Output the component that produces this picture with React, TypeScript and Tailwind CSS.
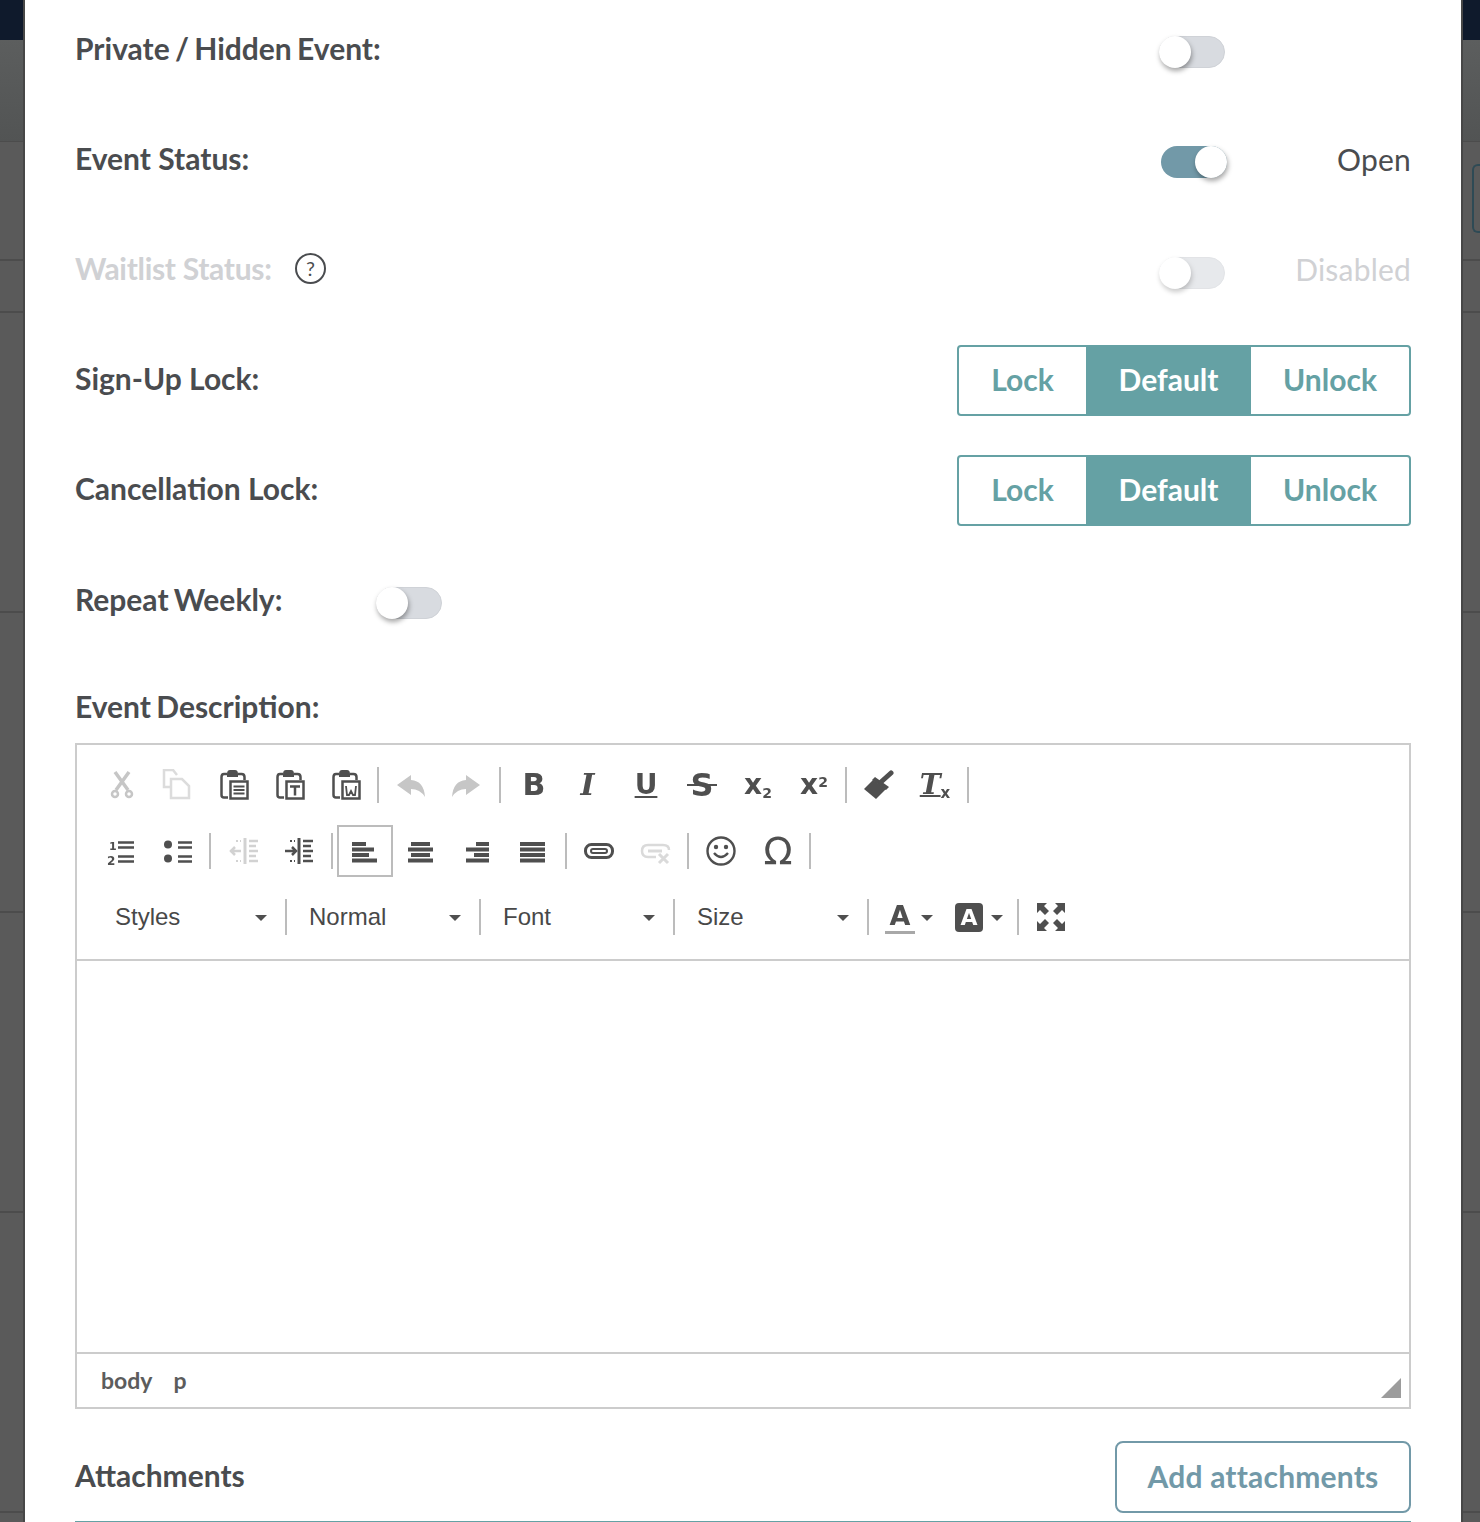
import React from "react";

const LABEL_FONT = "font-['Lato','Noto_Sans',sans-serif]";

function Toggle({ on, disabled }: { on?: boolean; disabled?: boolean }) {
  return (
    <div className={`relative w-[68px] h-[32px] shrink-0 ${disabled ? "opacity-60" : ""}`}>
      {on ? (
        <div className="ml-[2px] w-[66px] h-[32px] rounded-full bg-[#7299a8]" />
      ) : (
        <div className="w-[66px] h-[32px] rounded-full bg-[#d8dbe0] border border-[#cfd2d7]" />
      )}
      <div
        className={`absolute top-0 w-[32px] h-[32px] rounded-full bg-white shadow-[1px_3px_5px_rgba(0,0,0,0.35)] ${on ? "left-[36px]" : "left-0"}`}
      />
    </div>
  );
}

function Label({ children, faded, className = "" }: { children: React.ReactNode; faded?: boolean; className?: string }) {
  return (
    <div className={`-mt-[4px] text-[30px] leading-[36px] font-bold ${className} ${faded ? "text-[#d0d1d4]" : "text-[#4a4c4f]"}`}>
      {children}
    </div>
  );
}

function LockGroup() {
  return (
    <div className="flex w-[454px] h-[71px] border-2 border-[#65a1a4] rounded-[4px] text-[30px] font-bold text-[#65a1a4] overflow-hidden">
      <div className="w-[127px] flex items-center justify-center pb-[2px]">Lock</div>
      <div className="w-[165px] flex items-center justify-center pb-[2px] bg-[#65a1a4] text-white">Default</div>
      <div className="flex-1 flex items-center justify-center pb-[2px]">Unlock</div>
    </div>
  );
}

function Sep({ combo, wide }: { combo?: boolean; wide?: boolean }) {
  return (
    <div
      className={`w-[2px] h-[36px] bg-[#bcbcbc] shrink-0 ${wide ? "ml-[4px]" : "ml-[3px]"} ${combo ? "mr-[1px]" : "mr-[5px]"}`}
    />
  );
}

function Btn({ children, active }: { children: React.ReactNode; active?: boolean }) {
  return (
    <div
      className={`w-[56px] h-[52px] shrink-0 flex items-center justify-center ${active ? "border-2 border-[#bcbcbc] -ml-[1px]" : ""}`}
    >
      {children}
    </div>
  );
}

function Ico({ children, color = "#4f4f4f", sw = 2.5 }: { children: React.ReactNode; color?: string; sw?: number }) {
  return (
    <svg width="32" height="32" viewBox="0 0 32 32" fill="none" stroke={color} strokeWidth={sw} className="blur-[0.4px]">
      {children}
    </svg>
  );
}

function Clip({ children }: { children: React.ReactNode }) {
  return (
    <Ico>
      <path d="M9 5H6Q3.500 5 3.500 8v18q0 2.500 2.500 2.500h4" />
      <path d="M20 5h3.500q3 0 3 3v3" />
      <path d="M9 8V5q0-4 3-4h5q3 0 3 4v3z" fill="#4f4f4f" stroke="none" />
      <rect x="12.500" y="12.500" width="17" height="17" fill="#fff" />
      {children}
    </Ico>
  );
}

function AlignIcon({ rows }: { rows: [number, number][] }) {
  return (
    <Ico>
      {rows.map(([x, w], i) => (
        <rect key={i} x={x} y={7 + i * 5.5} width={w} height="4" fill="#4f4f4f" stroke="none" />
      ))}
    </Ico>
  );
}

function Glyph({ children, className }: { children: React.ReactNode; className: string }) {
  return <span className={`relative text-[#4f4f4f] leading-none blur-[0.3px] ${className}`}>{children}</span>;
}

function Combo({ label }: { label: string }) {
  return (
    <div className="w-[188px] h-[52px] shrink-0 flex items-center pl-[21px] pr-[15px] justify-between">
      <span className="text-[24px] text-[#484848] font-['Liberation_Sans',Arial,sans-serif]">{label}</span>
      <Caret />
    </div>
  );
}

function Caret() {
  return <span className="w-0 h-0 border-x-[6px] border-x-transparent border-t-[6px] border-t-[#4f4f4f] mt-[2px]" />;
}

export default function App() {
  return (
    <div className={`w-[1480px] h-[1522px] flex overflow-hidden bg-[#5a5a5a] ${LABEL_FONT}`}>
      <div className="w-[25px] shrink-0 flex flex-col border-r-2 border-[#474747]">
        <div className="h-[40px] bg-[#0f1a2c]" />
        <div className="h-[102px] bg-gradient-to-b from-[#5c5e5e] to-[#525454] border-b border-[#4c4c4c]" />
        <div className="h-[119px] border-b-2 border-[#4c4c4c]" />
        <div className="h-[52px] border-b-2 border-[#4c4c4c]" />
        <div className="h-[300px] border-b-2 border-[#4c4c4c]" />
        <div className="h-[300px] border-b-2 border-[#4c4c4c]" />
        <div className="h-[300px] border-b-2 border-[#4c4c4c]" />
        <div className="h-[300px] border-b-2 border-[#4c4c4c]" />
      </div>

      <div className="w-[1436px] shrink-0 h-full bg-white px-[50px] pt-[15px]">
        <div className="h-[70px] mb-[40px] flex items-center">
          <div className="flex-1"><Label className="[word-spacing:-2px]">Private / Hidden Event:</Label></div>
          <div className="mt-[4px]"><Toggle /></div>
          <div className="w-[184px]" />
        </div>
        <div className="h-[70px] mb-[40px] flex items-center">
          <div className="flex-1"><Label>Event Status:</Label></div>
          <div className="mt-[4px]"><Toggle on /></div>
          <div className="w-[184px] -mt-[2px] text-right text-[30px] tracking-[0.2px] text-[#4a4c4f] leading-[36px]">Open</div>
        </div>
        <div className="h-[70px] mb-[40px] flex items-center">
          <div className="flex-1 flex items-center">
            <div className="w-[220px]"><Label faded className="tracking-[-0.3px]">Waitlist Status:</Label></div>
            <div className="-mt-[4px] w-[31px] h-[31px] rounded-full border-2 border-[#4a4c4f] flex items-center justify-center text-[20px] text-[#4a4c4f] leading-none">?</div>
          </div>
          <div className="mt-[5px]"><Toggle disabled /></div>
          <div className="w-[184px] -mt-[2px] text-right text-[30px] tracking-[0.2px] text-[#d0d1d4] leading-[36px]">Disabled</div>
        </div>
        <div className="h-[70px] mb-[40px] flex items-center">
          <div className="flex-1"><Label>Sign-Up Lock:</Label></div>
          <LockGroup />
        </div>
        <div className="h-[70px] mb-[41px] flex items-center">
          <div className="flex-1"><Label>Cancellation Lock:</Label></div>
          <LockGroup />
        </div>
        <div className="h-[70px] flex items-center">
          <div className="w-[301px]"><Label className="[word-spacing:-2px]">Repeat Weekly:</Label></div>
          <div className="mt-[4px]"><Toggle /></div>
        </div>

        <div className="mt-[56px] h-[37px] mb-[18px]"><Label className="[word-spacing:-2px]">Event Description:</Label></div>

        <div className="w-[1336px] h-[666px] border-2 border-[#cccccc] flex flex-col">
          <div className="h-[216px] border-b-2 border-[#cccccc] px-[17px] pt-[7px] shrink-0">
            <div className="h-[66px] flex items-center">
              <Btn>
                <Ico color="#c6c6c6">
                  <path d="M9 3l13 18M23 3L10 21" strokeWidth="3.500" />
                  <circle cx="9" cy="25" r="3" />
                  <circle cx="23" cy="25" r="3" />
                </Ico>
              </Btn>
              <Btn>
                <Ico color="#dcdcdc">
                  <path d="M9 18H2V1h9l4 5" />
                  <path d="M9 10h11l7 7v12H9z" fill="#fff" />
                </Ico>
              </Btn>
              <Btn>
                <Clip>
                  <path d="M15.500 17.500h11M15.500 21h11M15.500 24.500h11" strokeWidth="2" />
                </Clip>
              </Btn>
              <Btn>
                <Clip>
                  <path d="M16 17.500h10M21 17.500v9" strokeWidth="2.500" />
                </Clip>
              </Btn>
              <Btn>
                <Clip>
                  <path d="M16 17l1 9h2l2-4 2 4h2l1-9" strokeWidth="1.800" />
                </Clip>
              </Btn>
              <Sep />
              <Btn>
                <Ico color="#c6c6c6">
                  <path d="M1 16L15 6v5Q28 12 29 28 24 20 15 20v6z" fill="#c6c6c6" stroke="none" />
                </Ico>
              </Btn>
              <Btn>
                <Ico color="#c6c6c6">
                  <path d="M28 16L14 6v5Q1 12 0 28 5 20 14 20v6z" fill="#c6c6c6" stroke="none" />
                </Ico>
              </Btn>
              <Sep />
              <Btn><Glyph className="text-[30px] font-bold font-['DejaVu_Sans',sans-serif]">B</Glyph></Btn>
              <Btn><Glyph className="-ml-[5px] text-[30px] font-bold italic font-['DejaVu_Serif',serif]">I</Glyph></Btn>
              <Btn><Glyph className="text-[28px] font-bold font-['DejaVu_Sans',sans-serif] underline decoration-2 underline-offset-2">U</Glyph></Btn>
              <Btn>
                <Glyph className="text-[32px] font-bold font-['DejaVu_Sans',sans-serif]">
                  S
                  <span className="absolute left-[-3px] right-[-3px] top-[15px] h-[2px] bg-[#4f4f4f]" />
                </Glyph>
              </Btn>
              <Btn>
                <Glyph className="text-[28px] font-bold font-['DejaVu_Sans',sans-serif]">x<sub className="text-[14px]">2</sub></Glyph>
              </Btn>
              <Btn>
                <Glyph className="text-[28px] font-bold font-['DejaVu_Sans',sans-serif]">x<sup className="text-[14px]">2</sup></Glyph>
              </Btn>
              <Sep />
              <Btn>
                <Ico>
                  <path d="M0 20L9 11l13 9-10 10z" fill="#4f4f4f" stroke="none" />
                  <path d="M8 11l3-3 14 10-3 3z" fill="#4f4f4f" stroke="none" />
                  <path d="M17 13L27 4" strokeWidth="5" strokeLinecap="round" />
                </Ico>
              </Btn>
              <Btn>
                <Glyph className="-ml-[2px] text-[28px] font-bold italic font-['DejaVu_Serif',serif] underline decoration-2">
                  T<sub className="text-[15px] not-italic font-['DejaVu_Sans',sans-serif] inline-block no-underline">x</sub>
                </Glyph>
              </Btn>
              <Sep />
            </div>

            <div className="h-[66px] flex items-center">
              <Btn>
                <Ico sw={2.5}>
                  <text x="3" y="15" fontSize="11" fontWeight="bold" fill="#4f4f4f" stroke="none" fontFamily="DejaVu Sans">1</text>
                  <text x="1" y="30" fontSize="12" fontWeight="bold" fill="#4f4f4f" stroke="none" fontFamily="DejaVu Sans">2</text>
                  <path d="M12 7.500h16M12 12.500h16M12 21.500h16M12 26.500h16" />
                </Ico>
              </Btn>
              <Btn>
                <Ico>
                  <circle cx="6" cy="9.500" r="4" fill="#4f4f4f" stroke="none" />
                  <circle cx="6" cy="23.500" r="4" fill="#4f4f4f" stroke="none" />
                  <path d="M16 7.500h14M16 12.500h14M16 21.500h14M16 26.500h14" />
                </Ico>
              </Btn>
              <Sep />
              <Btn>
                <Ico color="#d2d2d2" sw={2}>
                  <path d="M17 3v26" strokeWidth="3" />
                  <path d="M21 6h9M21 11h7M21 16h9M21 21h7M21 26h9" strokeWidth="2.500" />
                  <path d="M2 16h11M7 12l-4 4 4 4" strokeWidth="2.500" />
                  <path d="M8 6h5M8 26h5" strokeDasharray="2 2" />
                </Ico>
              </Btn>
              <Btn>
                <Ico sw={2}>
                  <path d="M15 3v26" strokeWidth="3" />
                  <path d="M19 6h10M19 11h8M19 16h10M19 21h8M19 26h10" strokeWidth="2.500" />
                  <path d="M1 16h11M8 12l4 4-4 4" strokeWidth="2.500" />
                  <path d="M6 6h5M6 26h5" strokeDasharray="2 2" />
                </Ico>
              </Btn>
              <Sep />
              <Btn active><AlignIcon rows={[[3, 14], [3, 22], [3, 17], [3, 25]]} /></Btn>
              <Btn><AlignIcon rows={[[6, 19], [3, 25], [6, 19], [3, 25]]} /></Btn>
              <Btn><AlignIcon rows={[[15, 13], [5, 23], [13, 15], [5, 23]]} /></Btn>
              <Btn><AlignIcon rows={[[3, 25], [3, 25], [3, 25], [3, 25]]} /></Btn>
              <Sep wide />
              <Btn>
                <Ico sw={2.5}>
                  <rect x="1.500" y="9.500" width="27" height="13" rx="6" strokeWidth="3" />
                  <rect x="7" y="14" width="16" height="4" rx="2" strokeWidth="2" />
                </Ico>
              </Btn>
              <Btn>
                <Ico color="#dadada">
                  <path d="M16 22H8q-6 0-6-6t6-6h15q6 0 6 5" strokeWidth="2.500" />
                  <path d="M8 16h14" strokeWidth="3" />
                  <path d="M19 19l9 9M28 19l-9 9" strokeWidth="3" />
                </Ico>
              </Btn>
              <Sep />
              <Btn>
                <Ico>
                  <circle cx="15" cy="16" r="13.500" strokeWidth="2.400" />
                  <circle cx="10" cy="12" r="2.200" fill="#4f4f4f" stroke="none" />
                  <circle cx="20" cy="12" r="2.200" fill="#4f4f4f" stroke="none" />
                  <path d="M8 18q7 8 14 0" strokeWidth="2.400" />
                </Ico>
              </Btn>
              <Btn><Glyph className="text-[38px] font-['DejaVu_Sans',sans-serif] font-medium">Ω</Glyph></Btn>
              <Sep />
            </div>

            <div className="h-[66px] flex items-center">
              <Combo label="Styles" />
              <Sep combo />
              <Combo label="Normal" />
              <Sep combo />
              <Combo label="Font" />
              <Sep combo />
              <Combo label="Size" />
              <Sep combo />
              <span className="ml-[15px] w-[30px] shrink-0 border-b-[3px] border-[#a8a8a8] text-center text-[27px] leading-[31px] font-bold text-[#4f4f4f] font-['DejaVu_Sans',sans-serif] blur-[0.3px]">A</span>
              <span className="ml-[6px] flex"><Caret /></span>
              <span className="ml-[22px] w-[28px] h-[29px] shrink-0 rounded-[4px] bg-[#4f4f4f] text-center text-[22px] leading-[29px] font-bold text-white font-['DejaVu_Sans',sans-serif] blur-[0.3px]">A</span>
              <span className="ml-[8px] flex"><Caret /></span>
              <div className="ml-[11px]"><Sep /></div>
              <div className="-ml-[1px]">
                <Btn>
                  <Ico>
                    <path
                      d="M2 2h10L9 5l5 5-4 4-5-5-3 3zM30 2H20l3 3-5 5 4 4 5-5 3 3zM2 30h10l-3-3 5-5-4-4-5 5-3-3zM30 30H20l3-3-5-5 4-4 5 5 3-3z"
                      fill="#4f4f4f"
                      stroke="none"
                    />
                  </Ico>
                </Btn>
              </div>
            </div>
          </div>

          <div className="h-[391px] shrink-0" />

          <div className="flex-1 border-t-2 border-[#cccccc] flex items-center justify-between pl-[24px] pr-[8px]">
            <div className="flex gap-[21px] text-[23px] font-bold text-[#5c5c5c] -mt-[1px]">
              <span>body</span>
              <span>p</span>
            </div>
            <div className="w-0 h-0 mt-[14px] border-l-[20px] border-l-transparent border-b-[20px] border-b-[#9c9c9c]" />
          </div>
        </div>

        <div className="mt-[32px] flex items-center justify-between h-[72px]">
          <Label>Attachments</Label>
          <div className="w-[296px] h-[72px] border-2 border-[#7299a8] rounded-[8px] flex items-center justify-center pb-[2px] text-[30px] tracking-[0.2px] font-bold text-[#7299a8]">
            Add attachments
          </div>
        </div>
        <div className="mt-[8px] h-[2px] bg-[#65a1a4]" />
      </div>

      <div className="flex-1 flex flex-col border-l-2 border-[#474747]">
        <div className="h-[40px] bg-[#0f1a2c]" />
        <div className="h-[102px] bg-gradient-to-b from-[#5c5e5e] to-[#525454] border-b border-[#4c4c4c]" />
        <div className="h-[119px] border-b-2 border-[#4c4c4c] pt-[22px]">
          <div className="ml-[9px] h-[69px] border-2 border-r-0 border-[#2e4a55] rounded-l-[6px]" />
        </div>
        <div className="h-[52px] border-b-2 border-[#4c4c4c]" />
        <div className="h-[300px] border-b-2 border-[#4c4c4c]" />
        <div className="h-[300px] border-b-2 border-[#4c4c4c]" />
        <div className="h-[300px] border-b-2 border-[#4c4c4c]" />
        <div className="h-[300px] border-b-2 border-[#4c4c4c]" />
      </div>
    </div>
  );
}
